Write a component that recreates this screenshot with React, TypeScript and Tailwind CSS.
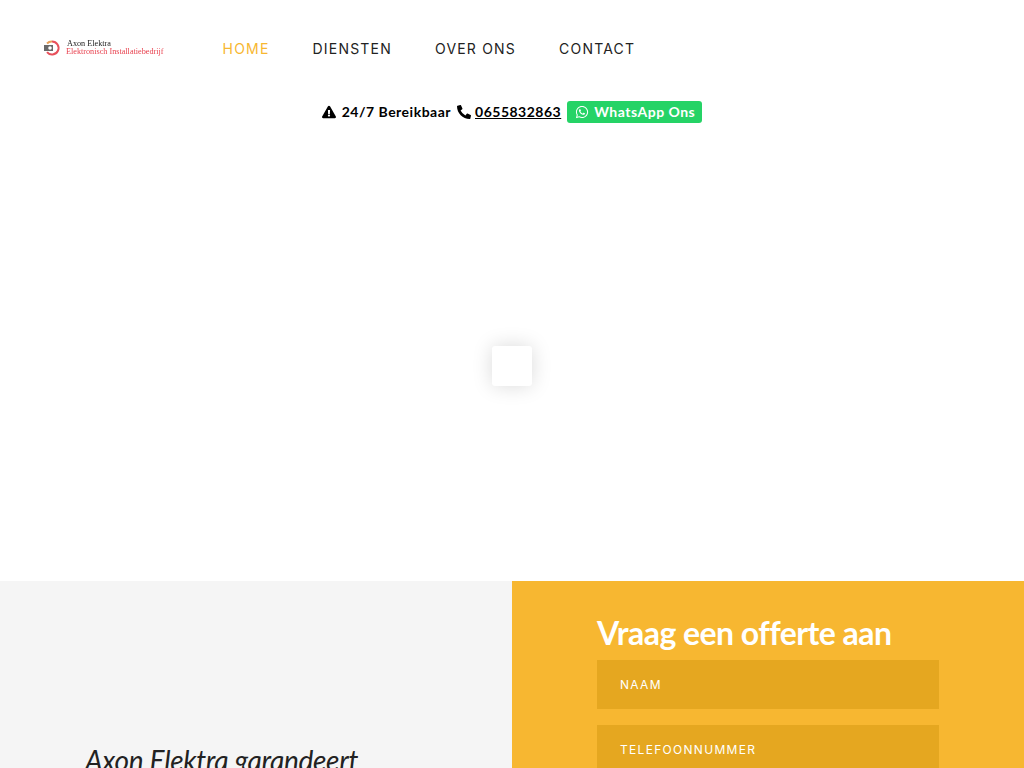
import { FaExclamationTriangle, FaPhoneAlt, FaWhatsapp } from "react-icons/fa";

const navItems = ["HOME", "DIENSTEN", "OVER ONS", "CONTACT"];

function Logo() {
  return (
    <div className="flex items-center gap-[5px] blur-[0.3px]">
      <svg width="18" height="16" viewBox="0 0 18 16" fill="none">
        <path d="M9 1.5a6.5 6.5 0 1 1-5 10.6" stroke="#e8505b" strokeWidth="2" />
        <path d="M4 3.5a6.5 6.5 0 0 1 5-2" stroke="#e8a05b" strokeWidth="2" />
        <rect x="1" y="5" width="9" height="6" fill="#6a6a6a" />
        <circle cx="7" cy="8" r="1.8" fill="#fff" />
      </svg>
      <div className="font-['Liberation_Serif',serif] text-[8.2px] leading-[8px] whitespace-nowrap">
        <div className="pl-px text-[#222222]">Axon Elektra</div>
        <div className="text-[#e8414e]">Elektronisch Installatiebedrijf</div>
      </div>
    </div>
  );
}

function Field({ label }: { label: string }) {
  return (
    <div className="flex h-[49px] shrink-0 items-center bg-[#e5a720] pl-[23px] font-['Inter',sans-serif] text-[12px] tracking-[1.3px] text-white">
      {label}
    </div>
  );
}

export default function App() {
  return (
    <div className="flex h-[768px] flex-col overflow-hidden bg-white font-['Lato',sans-serif]">
      <header className="flex h-[96px] shrink-0 items-center pl-[43px]">
        <Logo />
        <nav className="ml-[59px] flex gap-[43px] font-['Inter',sans-serif] text-[14px] tracking-[1.2px] text-[#222222]">
          {navItems.map((item, i) => (
            <a key={item} className={i === 0 ? "text-[#f7b731]" : ""}>
              {item}
            </a>
          ))}
        </nav>
      </header>

      <div className="flex h-[32px] shrink-0 items-center justify-center text-[14px] font-bold tracking-[0.5px] text-black">
        <FaExclamationTriangle className="mr-[6px] h-[14px] w-[14px]" />
        <span className="pb-[2px]">24/7 Bereikbaar</span>
        <FaPhoneAlt className="mr-[4px] ml-[6px] h-[14px] w-[14px]" />
        <a className="pb-[2px] underline">0655832863</a>
        <a className="ml-[6px] flex h-[22px] items-center rounded-[3px] bg-[#25d366] pr-[7px] pl-[8px] text-white">
          <FaWhatsapp className="mr-[5px] h-[14px] w-[14px]" />
          <span className="pb-[2px]">WhatsApp Ons</span>
        </a>
      </div>

      <div className="mt-[23px] flex h-[430px] shrink-0 items-center justify-center">
        <div className="h-[40px] w-[40px] rounded-[3px] bg-white shadow-[0_0_20px_rgba(0,0,0,0.15)]" />
      </div>

      <section className="grid shrink-0 grid-cols-2">
        <div className="h-[300px] bg-[#f5f5f5] pt-[163px] pl-[85px]">
          <h2 className="text-[28px] leading-[32px] tracking-[-0.3px] text-[#222222] italic">Axon Elektra garandeert</h2>
        </div>
        <div className="h-[300px] bg-[#f7b731] pt-[32px] pl-[85px]">
          <h2 className="text-[32px] leading-[40px] font-bold tracking-[-0.55px] text-white">Vraag een offerte aan</h2>
          <div className="mt-[7px] flex w-[342px] flex-col gap-[16px]">
            <Field label="NAAM" />
            <Field label="TELEFOONNUMMER" />
          </div>
        </div>
      </section>
    </div>
  );
}
